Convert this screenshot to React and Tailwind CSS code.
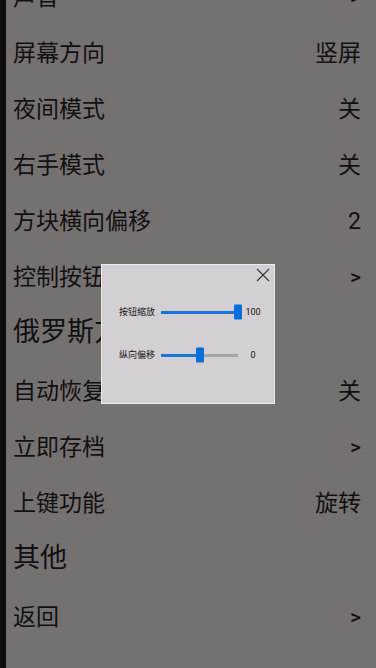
import React from 'react';

const rows = [
  { type: 'item', label: '声音', value: '>' },
  { type: 'item', label: '屏幕方向', value: '竖屏' },
  { type: 'item', label: '夜间模式', value: '关' },
  { type: 'item', label: '右手模式', value: '关' },
  { type: 'item', label: '方块横向偏移', value: '2' },
  { type: 'item', label: '控制按钮', value: '>' },
  { type: 'header', label: '俄罗斯方块' },
  { type: 'item', label: '自动恢复', value: '关' },
  { type: 'item', label: '立即存档', value: '>' },
  { type: 'item', label: '上键功能', value: '旋转' },
  { type: 'header', label: '其他' },
  { type: 'item', label: '返回', value: '>' },
];

const Slider = ({ label, percent, value }) => (
  <div className="flex items-center h-[16px] pl-[17px]">
    <span className="w-[42px] text-[9px] leading-none text-[#151414]">{label}</span>
    <div className="relative w-[77px] h-[3px] bg-[#a9a5a8]">
      <div className="h-full bg-[#1576d6]" style={{ width: `${percent}%` }} />
      <div
        className="absolute top-1/2 w-[8px] h-[15px] -translate-x-1/2 -translate-y-1/2 bg-[#0a6fd8] rounded-[1px]"
        style={{ left: `${percent}%` }}
      />
    </div>
    <span className="w-[30px] text-center text-[9px] leading-none text-[#151414]">{value}</span>
  </div>
);

const App = () => {
  return (
    <div
      className="relative flex h-[668px] overflow-hidden bg-[#767171] text-[#111010]"
      style={{ fontFamily: 'Roboto, "Noto Sans CJK SC", sans-serif' }}
    >
      <div className="w-[6px] shrink-0 bg-[#0f0d0c]" />
      <div className="flex-1 mt-[-31px] pl-[7px] pr-[15px]">
        {rows.map((row) =>
          row.type === 'header' ? (
            <div key={row.label} className="h-[58px] pt-[14px] text-[27px] leading-none">
              {row.label}
            </div>
          ) : (
            <div key={row.label} className="flex h-[56px] items-center justify-between text-[23px] leading-none">
              <span>{row.label}</span>
              {row.value === '>' ? (
                <span className="text-[21px] font-medium">&gt;</span>
              ) : (
                <span>{row.value}</span>
              )}
            </div>
          )
        )}
      </div>

      <div className="absolute left-[101px] top-[264px] w-[174px] h-[140px] border border-[#ecebec] bg-[#d3cfd3]">
        <div className="flex justify-end pt-[3px] pr-[4px]">
          <svg width="14" height="14" viewBox="0 0 14 14" fill="none" stroke="#3a3838" strokeWidth="1.1">
            <path d="M1 1L13 13M13 1L1 13" />
          </svg>
        </div>
        <div className="mt-[22px]">
          <Slider label="按钮缩放" percent={100} value="100" />
        </div>
        <div className="mt-[27px]">
          <Slider label="纵向偏移" percent={50} value="0" />
        </div>
      </div>
    </div>
  );
};

export default App;
